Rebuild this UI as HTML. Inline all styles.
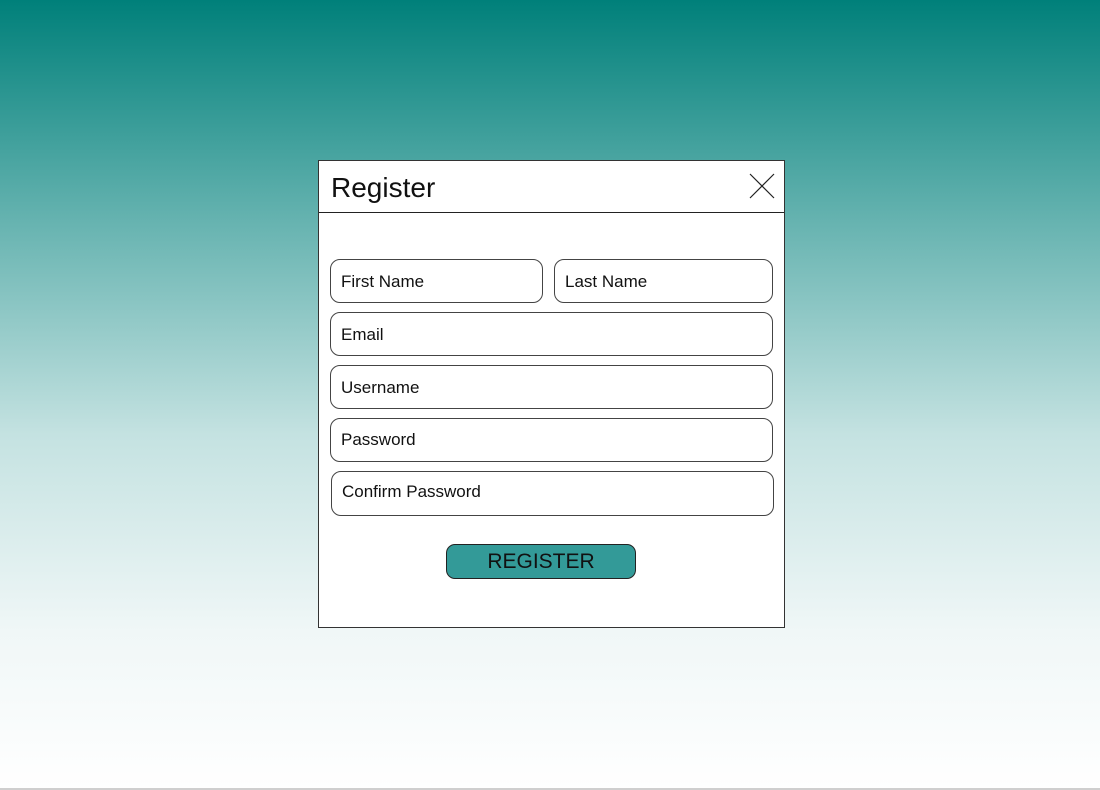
<!DOCTYPE html>
<html><head><style>
html,body{margin:0;padding:0;width:1100px;height:790px;overflow:hidden}
body{background:linear-gradient(to bottom,#00807a 0%,#66b3b0 28%,#c4e2e1 55%,#f0f7f7 80%,#ffffff 100%);font-family:"Liberation Sans",sans-serif;position:relative}
.line{position:absolute;left:0;top:788px;width:1100px;height:2px;background:#cfcfcf}
.box{position:absolute;left:318px;top:160px;width:465px;height:466px;background:#fff;border:1px solid #333}
.hd{position:absolute;left:0;top:0;width:465px;height:51px;border-bottom:1px solid #222}
.ttl{position:absolute;left:12px;top:11px;font-size:28px;color:#111}
.x{position:absolute;left:430px;top:12px}
.in{position:absolute;height:42px;border:1px solid #444;border-radius:10px;box-sizing:border-box;font-size:17px;color:#111;padding-left:10px;line-height:42px}
.btn{position:absolute;left:127px;top:383px;width:190px;height:35px;background:#339a98;border:1px solid #222;border-radius:9px;box-sizing:border-box;text-align:center;line-height:33px;font-size:21px;color:#111}
</style></head><body>
<div class="box">
 <div class="hd"><div class="ttl">Register</div>
 <svg class="x" width="26" height="26" viewBox="0 0 26 26"><path d="M1 1L25 25M25 1L1 25" stroke="#222" stroke-width="1.2" fill="none"/></svg></div>
 <div class="in" style="left:11px;top:98px;width:213px;height:44px;line-height:44px">First Name</div>
 <div class="in" style="left:235px;top:98px;width:219px;height:44px;line-height:44px">Last Name</div>
 <div class="in" style="left:11px;top:151px;width:443px;height:44px;line-height:44px">Email</div>
 <div class="in" style="left:11px;top:204px;width:443px;height:44px;line-height:44px">Username</div>
 <div class="in" style="left:11px;top:257px;width:443px;height:44px;line-height:42px">Password</div>
 <div class="in" style="left:12px;top:310px;width:443px;height:45px;line-height:40px">Confirm Password</div>
 <div class="btn">REGISTER</div>
</div>
<div class="line"></div>
</body></html>
